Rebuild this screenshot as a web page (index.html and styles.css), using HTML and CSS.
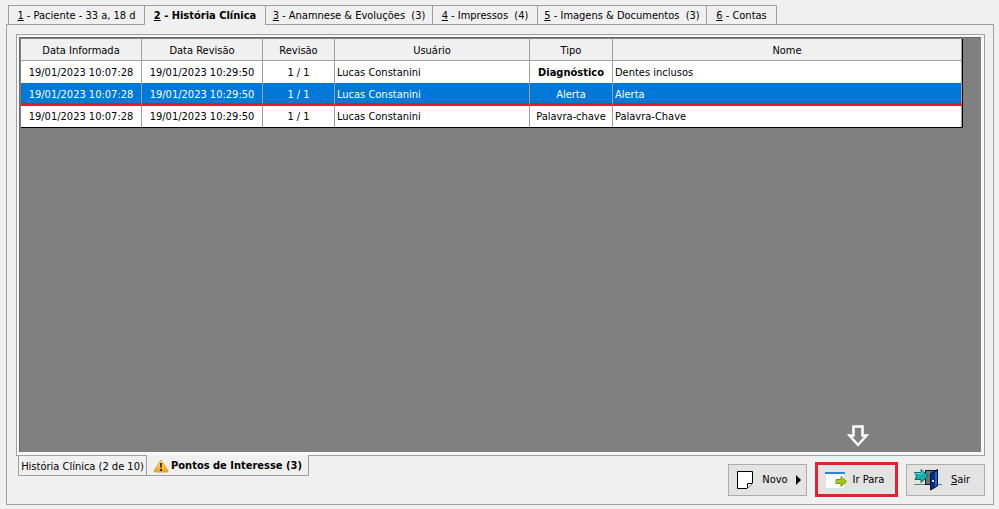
FILE: index.html
```
<!DOCTYPE html>
<html lang="pt-BR">
<head>
    <meta charset="utf-8">
    <title>História Clínica</title>
    <meta name="viewport" content="width=device-width, initial-scale=1">
    <link rel="stylesheet" href="styles.css">
</head>
<body>

    <div class="tabs">
        <button class="tab tab-paciente"><u>1</u> - Paciente - 33 a, 18 d</button>
        <button class="tab tab-historia active"><u>2</u> - História Clínica</button>
        <button class="tab tab-anamnese"><u>3</u> - Anamnese &amp; Evoluções&nbsp; (3)</button>
        <button class="tab tab-impressos"><u>4</u> - Impressos&nbsp; (4)</button>
        <button class="tab tab-imagens"><u>5</u> - Imagens &amp; Documentos&nbsp; (3)</button>
        <button class="tab tab-contas"><u>6</u> - Contas</button>
    </div>

    <main class="panel">
        <div class="frame">
            <div class="grid-area">
                <table>
                    <colgroup>
                        <col class="col-date">
                        <col class="col-date">
                        <col class="col-rev">
                        <col class="col-user">
                        <col class="col-type">
                        <col>
                    </colgroup>
                    <thead>
                        <tr>
                            <th>Data Informada</th>
                            <th>Data Revisão</th>
                            <th>Revisão</th>
                            <th>Usuário</th>
                            <th>Tipo</th>
                            <th>Nome</th>
                        </tr>
                    </thead>
                    <tbody>
                        <tr>
                            <td>19/01/2023 10:07:28</td>
                            <td>19/01/2023 10:29:50</td>
                            <td>1 / 1</td>
                            <td class="left">Lucas Constanini</td>
                            <td><b>Diagnóstico</b></td>
                            <td class="left">Dentes inclusos</td>
                        </tr>
                        <tr class="selected">
                            <td>19/01/2023 10:07:28</td>
                            <td>19/01/2023 10:29:50</td>
                            <td>1 / 1</td>
                            <td class="left">Lucas Constanini</td>
                            <td>Alerta</td>
                            <td class="left">Alerta</td>
                        </tr>
                        <tr>
                            <td>19/01/2023 10:07:28</td>
                            <td>19/01/2023 10:29:50</td>
                            <td>1 / 1</td>
                            <td class="left">Lucas Constanini</td>
                            <td>Palavra-chave</td>
                            <td class="left">Palavra-Chave</td>
                        </tr>
                    </tbody>
                </table>
            </div>
        </div>

        <div class="footer">
            <div class="bottom-tabs">
                <button class="bottom-tab tab-lista">História Clínica (2 de 10)</button>
                <button class="bottom-tab tab-pontos active">
                    <svg width="16" height="14" viewBox="0 0 16 14">
                        <defs>
                            <linearGradient id="warn" x1="0" y1="0" x2="0" y2="1">
                                <stop offset="0" stop-color="#fff0a0"/>
                                <stop offset="0.5" stop-color="#fcc843"/>
                                <stop offset="1" stop-color="#f09a10"/>
                            </linearGradient>
                        </defs>
                        <path d="M8 1 L15 12 Q15 13 14 13 H2 Q1 13 1 12 Z" fill="url(#warn)" stroke="#dfa030" stroke-width="1" stroke-linejoin="round"/>
                        <path d="M7 4 H9 L8.6 9 H7.4 Z M7 10 H9 V12 H7 Z" fill="#332818"/>
                    </svg>
                    Pontos de Interesse (3)
                </button>
            </div>

            <div class="actions">
                <button class="action">
                    <svg width="18" height="20" viewBox="0 0 18 20">
                        <path d="M1.5 1.5 H16.5 V13 L11 18.5 H1.5 Z" fill="#fff" stroke="#000"/>
                        <path d="M11.5 18 V13.5 H16" fill="#fff" stroke="#000"/>
                    </svg>
                    <span>Novo</span>
                    <svg width="5" height="10" viewBox="0 0 5 10"><path d="M0 0 L5 5 L0 10 Z"/></svg>
                </button>
                <div class="highlight">
                    <svg class="pointer" width="22" height="22" viewBox="0 0 22 22">
                        <path d="M6.5 1.5 H15.5 V10.5 H19.5 L11 20 L2.5 10.5 H6.5 Z" fill="#808080" stroke="#fff" stroke-width="2.5"/>
                    </svg>
                    <button class="action">
                        <svg width="22" height="17" viewBox="0 0 22 17">
                            <rect x="0" y="0" width="20" height="16" fill="#fbfcfe"/>
                            <path d="M0.5 2 V16.5 H19.5 V2" fill="none" stroke="#dce3ea"/>
                            <rect x="0" y="0" width="20" height="2" fill="#2388d8"/>
                            <path d="M11 7.5 H16 V4.500 L21.500 9.5 L16 14.500 V11.5 H11 Z" fill="#a0c916" stroke="#729b19"/>
                        </svg>
                        <span>Ir Para</span>
                    </button>
                </div>
                <button class="action">
                    <svg width="28" height="22" viewBox="0 0 28 22">
                        <path d="M0 15.5 H28" stroke="#777"/>
                        <rect x="11.5" y="1.5" width="12" height="14" fill="#6d7474" stroke="#111"/>
                        <path d="M16.5 4.5 L23.5 0.5 V17 L16.5 21 Z" fill="#082d88" stroke="#001238"/>
                        <path d="M21 3 L23 2 V16 L21 18 Z" fill="#2366bd"/>
                        <rect x="18" y="11" width="2" height="2" fill="#d8e6f0"/>
                        <path d="M0.5 3.5 H7 V0.5 L14 7 L7 13.5 V10.5 H1 L2.5 7 Z" fill="#16afae" stroke="#07656b"/>
                        <path d="M1 4.5 H8 V2" fill="none" stroke="#62dfd4"/>
                    </svg>
                    <span><u>S</u>air</span>
                </button>
            </div>
        </div>
    </main>

</body>
</html>
```
FILE: styles.css
```
* {
    box-sizing: border-box;
}

body {
    margin: 0;
    padding: 5px 5px 4px 6px;
    min-height: 100vh;
    display: flex;
    flex-direction: column;
    background-color: #f0f0f0;
    color: #000;
    font-family: "DejaVu Sans Condensed", "DejaVu Sans", sans-serif;
    font-size: 11px;
    line-height: 14px;
}

button {
    font: inherit;
    color: inherit;
    padding: 0;
    white-space: nowrap;
}

svg {
    flex: none;
}

.tabs {
    display: flex;
    padding-left: 2px;
}

.tab {
    height: 19px;
    padding-top: 2px;
    border: 1px solid #a0a0a0;
    border-width: 1px 1px 0 0;
    background-color: #f0f0f0;
}

.tab:first-child {
    border-left-width: 1px;
}

.tab.active {
    position: relative;
    height: 20px;
    margin-bottom: -1px;
    padding-top: 0;
    font-weight: bold;
}

.tab-paciente {
    width: 137px;
}

.tab-historia {
    width: 121px;
}

.tab-anamnese {
    width: 167px;
}

.tab-impressos {
    width: 105px;
}

.tab-imagens {
    width: 169px;
}

.tab-contas {
    width: 70px;
}

.panel {
    flex: 1;
    display: flex;
    flex-direction: column;
    padding: 9px 8px 8px 9px;
    border: 1px solid #a0a0a0;
}

.frame {
    flex: 1;
    display: flex;
    padding: 2px 3px 3px 2px;
    border: 1px solid #a0a0a0;
    background-color: #f8f8f8;
}

.grid-area {
    flex: 1;
    padding: 1px 18px 1px 1px;
    border: 1px solid #696969;
    border-width: 1px 0 0 1px;
    background-color: #808080;
}

table {
    width: 100%;
    table-layout: fixed;
    border-collapse: separate;
    border-spacing: 0;
    border-right: 1px solid #000;
    border-bottom: 1px solid #000;
    background-color: #fff;
}

.col-date {
    width: 121px;
}

.col-rev {
    width: 72px;
}

.col-user {
    width: 195px;
}

.col-type {
    width: 83px;
}

th,
td {
    height: 22px;
    padding: 1px 2px 0;
    border-right: 1px solid #a0a0a0;
    text-align: center;
    white-space: nowrap;
}

th {
    padding-top: 2px;
    border-bottom: 1px solid #a0a0a0;
    background-color: #f0f0f0;
    font-weight: normal;
}

.left {
    text-align: left;
}

.selected td {
    height: 23px;
    padding-top: 4px;
    border-bottom: 3px solid #e01b2d;
    background-color: #0078d7;
    color: #fff;
}

.selected + tr td {
    height: 21px;
}

.footer {
    display: flex;
    justify-content: space-between;
    align-items: flex-start;
}

.bottom-tabs {
    display: flex;
    padding-left: 2px;
}

.bottom-tab {
    height: 20px;
    padding-top: 2px;
    border: 1px solid #a0a0a0;
    border-width: 0 1px 1px 0;
    background-color: #f0f0f0;
}

.bottom-tab:first-child {
    border-left-width: 1px;
}

.bottom-tab.active {
    position: relative;
    display: flex;
    align-items: center;
    justify-content: center;
    gap: 2px;
    height: 21px;
    margin-top: -1px;
    font-weight: bold;
}

.tab-lista {
    width: 129px;
}

.tab-pontos {
    width: 162px;
}

.actions {
    display: flex;
    align-items: center;
    gap: 8px;
    padding-top: 6px;
    margin-bottom: -1px;
}

.action {
    display: flex;
    align-items: center;
    justify-content: space-between;
    width: 79px;
    height: 32px;
    padding: 1px 5px 0 7px;
    border: 1px solid #adadad;
    background-color: #e3e3e3;
}

.action span {
    flex: 1;
    text-align: center;
}

.highlight {
    position: relative;
    border: 3px solid #e8202c;
}

.highlight .action {
    width: 77px;
    height: 29px;
    border: 0;
}

.pointer {
    position: absolute;
    top: -40px;
    left: 29px;
}
```
